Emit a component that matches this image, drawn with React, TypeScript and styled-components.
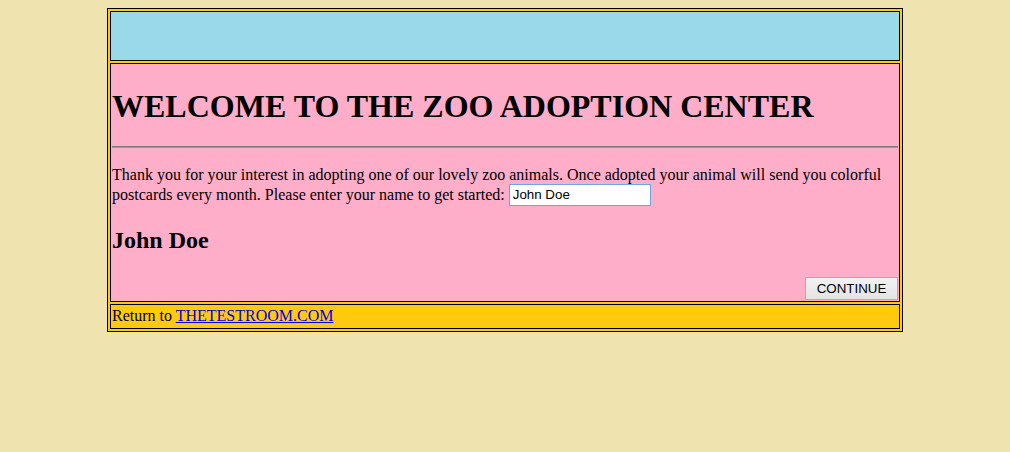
import styled, { createGlobalStyle } from "styled-components";

const Global = createGlobalStyle`
  body {
    margin: 8px;
    background: #efe4b0;
    font-family: "Liberation Serif", "Times New Roman", serif;
    font-size: 16px;
    color: #000;
  }
`;

const Frame = styled.table`
  width: 796px;
  margin: 0 auto;
  border: 1px solid #000;
  border-collapse: separate;
  border-spacing: 2px;
  background: #ffc90e;
`;

const Cell = styled.td<{ $tone: string }>`
  border: 1px solid #000;
  padding: 1px;
  vertical-align: top;
  background: ${(p) => p.$tone};
`;

const Banner = styled.div`
  height: 46px;
`;

const Title = styled.h1`
  font-size: 32px;
  font-weight: bold;
  margin: 22.5px 0 21.44px;
`;

const Rule = styled.hr`
  margin: 8px 0;
  border: 0;
  border-top: 1px solid #7a7a7a;
  border-bottom: 1px solid #9a9a9a;
  height: 0;
`;

const Intro = styled.p`
  margin: 18px 0 16px;
  line-height: normal;
`;

const NameInput = styled.input`
  box-sizing: border-box;
  width: 142px;
  height: 22px;
  padding: 1px 3px;
  border: 1px solid #6fa3e3;
  background: #fff;
  font-family: "Liberation Sans", Arial, sans-serif;
  font-size: 13.33px;
  color: #000;
  vertical-align: baseline;
  outline: none;
`;

const Greeting = styled.h2`
  font-size: 24px;
  font-weight: bold;
  margin: 21px 0 0;
`;

const Actions = styled.div`
  display: flex;
  justify-content: flex-end;
  padding-top: 23px;
`;

const Continue = styled.button`
  box-sizing: border-box;
  width: 93px;
  height: 23px;
  padding: 0 6px;
  border: 1px solid #adadad;
  background: linear-gradient(#f2f2f2, #e4e4e4);
  font-family: "Liberation Sans", Arial, sans-serif;
  font-size: 13.33px;
  color: #000;
  cursor: pointer;
`;

const FooterLine = styled.div`
  height: 21px;
  line-height: 18px;
  padding-top: 1px;
  box-sizing: border-box;
`;

const HomeLink = styled.a`
  color: #0000ee;
  text-decoration: underline;
`;

export default function App() {
  return (
    <>
      <Global />
      <Frame>
        <tbody>
          <tr>
            <Cell $tone="#99d9ea">
              <Banner />
            </Cell>
          </tr>
          <tr>
            <Cell $tone="#ffaec9">
              <Title>WELCOME TO THE ZOO ADOPTION CENTER</Title>
              <Rule />
              <Intro>
                Thank you for your interest in adopting one of our lovely zoo
                animals. Once adopted your animal will send you colorful
                postcards every month. Please enter your name to get started:{" "}
                <NameInput defaultValue="John Doe" />
              </Intro>
              <Greeting>John Doe</Greeting>
              <Actions>
                <Continue>CONTINUE</Continue>
              </Actions>
            </Cell>
          </tr>
          <tr>
            <Cell $tone="#ffc90e">
              <FooterLine>
                Return to <HomeLink href="#">THETESTROOM.COM</HomeLink>
              </FooterLine>
            </Cell>
          </tr>
        </tbody>
      </Frame>
    </>
  );
}
